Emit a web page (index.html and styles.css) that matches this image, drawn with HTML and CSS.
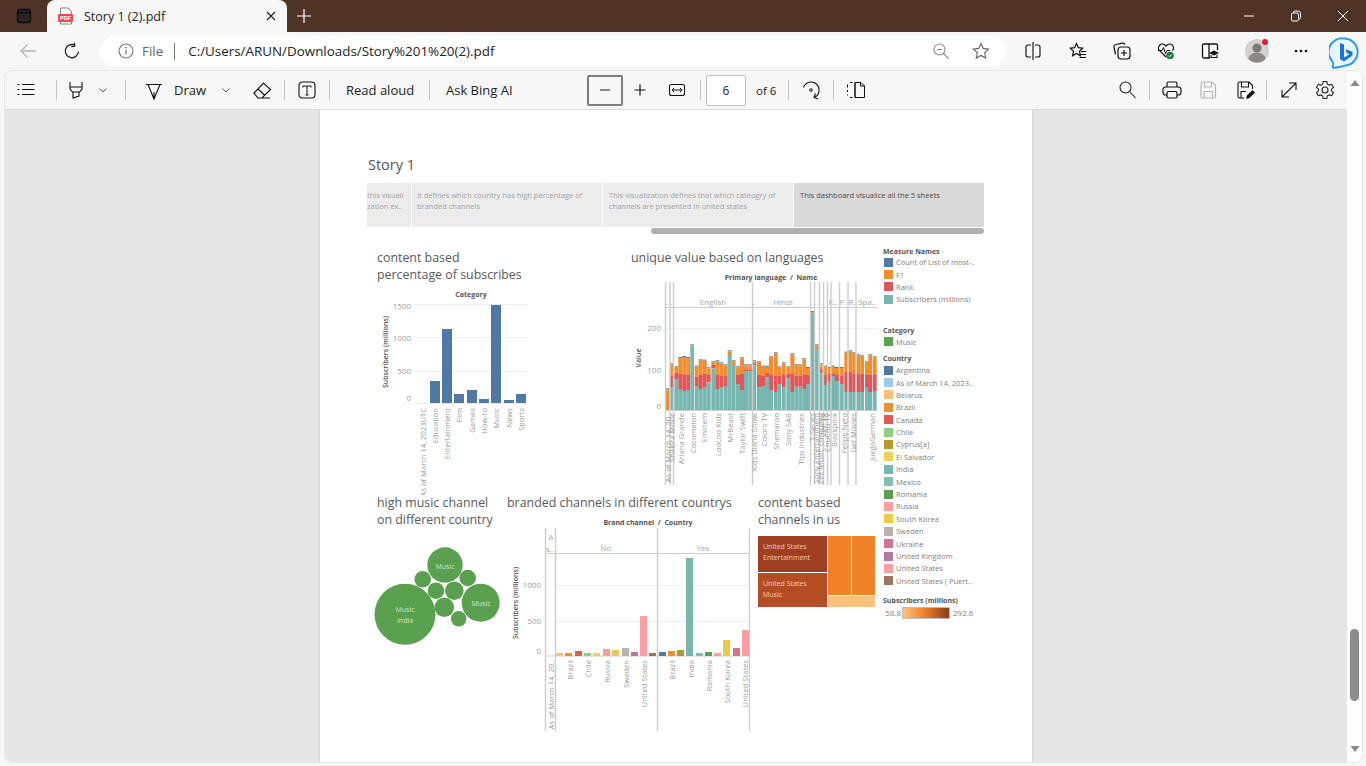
FILE: index.html
```html
<!DOCTYPE html>
<html lang="en">
<head>
    <meta charset="UTF-8">
    <title>Story 1 (2).pdf</title>
    <link rel="stylesheet" href="styles.css">
</head>
<body>
    <!-- tab strip -->
    <div class="tabbar">
        <svg class="tab-panel" width="16" height="16" viewBox="0 0 16 16"><rect x="1.5" y="1.5" width="13" height="13" rx="2.5" fill="#2a2421" stroke="#0c0c0c" stroke-width="1.3"/><path d="M2 4.8h12" stroke="#0c0c0c" stroke-width="1.3"/></svg>
        <div class="tab">
            <svg width="16" height="18" viewBox="0 0 16 18"><path d="M2.5 1h7.500l3.500 3.500V17h-11z" fill="#fff" stroke="#666" stroke-width=".8"/><rect x="0" y="7" width="15" height="8" rx="1" fill="#f04a4a"/><text x="7.5" y="13.4" class="pdf-mark">PDF</text></svg>
            <span class="tab-title">Story 1 (2).pdf</span>
            <svg class="tab-close" width="12" height="12" viewBox="0 0 12 12"><path d="M2 2l8 8M10 2l-8 8" stroke="#222" stroke-width="1.2"/></svg>
        </div>
        <svg class="tab-new" width="16" height="16" viewBox="0 0 16 16"><path d="M8 1v14M1 8h14" stroke="#fff" stroke-width="1.2"/></svg>
        <div class="win-controls">
            <svg width="12" height="12" viewBox="0 0 12 12"><path d="M1 6h10" stroke="#fff" stroke-width="1"/></svg>
            <svg width="12" height="12" viewBox="0 0 12 12"><rect x="1.5" y="3" width="7" height="8" rx="1.4" fill="none" stroke="#fff"/><path d="M3.5 3V2.4A1.4 1.4 0 0 1 4.900 1h3.200a2.400 2.400 0 0 1 2.400 2.400v4.200a1.400 1.400 0 0 1-1.500 1.400" fill="none" stroke="#fff"/></svg>
            <svg width="12" height="12" viewBox="0 0 12 12"><path d="M1 1l10 10M11 1L1 11" stroke="#fff" stroke-width="1"/></svg>
        </div>
    </div>

    <!-- address row -->
    <div class="navbar">
        <svg class="nav-back" width="18" height="16" viewBox="0 0 18 16"><path d="M17 8H2M8.5 1.5L2 8l6.5 6.500" fill="none" stroke="#b5b5b5" stroke-width="1.3"/></svg>
        <svg class="nav-reload" width="18" height="18" viewBox="0 0 18 18"><path d="M15.5 9.500A6.600 6.600 0 1 1 11.400 3" fill="none" stroke="#222" stroke-width="1.3"/><path d="M11.600 .6v3.600H8" fill="none" stroke="#222" stroke-width="1.3" transform="rotate(-12 11 3)"/></svg>
        <div class="address">
            <svg width="16" height="16" viewBox="0 0 16 16"><circle cx="8" cy="8" r="7" fill="none" stroke="#777" stroke-width="1.1"/><path d="M8 7v4.600" stroke="#777" stroke-width="1.3"/><circle cx="8" cy="4.7" r=".9" fill="#777"/></svg>
            <span class="addr-file">File</span>
            <span class="addr-sep"></span>
            <span class="addr-url">C:/Users/ARUN/Downloads/Story%201%20(2).pdf</span>
            <svg class="addr-zoom" width="16" height="16" viewBox="0 0 16 16"><circle cx="6.5" cy="6.5" r="5.5" fill="none" stroke="#888" stroke-width="1.1"/><path d="M4 6.500h5M10.500 10.500l5 5" stroke="#888" stroke-width="1.1"/></svg>
            <svg class="addr-star" width="18" height="18" viewBox="0 0 18 18"><path d="M9 1.500l2.300 4.900 5.300.7-3.900 3.700 1 5.300L9 13.500l-4.700 2.600 1-5.300-3.900-3.700 5.300-.7z" fill="none" stroke="#666" stroke-width="1.1"/></svg>
        </div>
        <svg class="nav-split" width="16" height="18" viewBox="0 0 16 18"><path d="M8 0v18" stroke="#1a1a1a" stroke-width="1.2"/><path d="M6 3H3a2 2 0 0 0-2 2v8a2 2 0 0 0 2 2h3M10 3h3a2 2 0 0 1 2 2v8a2 2 0 0 1-2 2h-3" fill="none" stroke="#1a1a1a" stroke-width="1.2"/></svg>
        <svg class="nav-fav" width="18" height="18" viewBox="0 0 18 18"><path d="M7.500 1.500l1.900 4.200 4.300.5-3.200 3 .9 4.500-3.900-2.300-3.900 2.300.9-4.500-3.200-3 4.300-.5z" fill="none" stroke="#111" stroke-width="1.2"/><path d="M12 9.500h5M11.500 12.500h5.500M10.500 15.500h6.500" stroke="#111" stroke-width="1.1"/></svg>
        <svg class="nav-coll" width="18" height="18" viewBox="0 0 18 18"><rect x="5" y="5" width="12" height="12" rx="3" fill="none" stroke="#111" stroke-width="1.2"/><path d="M11 8v6M8 11h6M2.500 12.500L1 5.500a2.500 2.500 0 0 1 2-3l6.500-1.400a2 2 0 0 1 2.300 1.500" fill="none" stroke="#111" stroke-width="1.2"/></svg>
        <svg class="nav-health" width="18" height="18" viewBox="0 0 18 18"><path d="M9 15L2.600 8.600A3.800 3.800 0 0 1 8 3.200l1 1 1-1a3.800 3.800 0 0 1 5.400 5.400" fill="none" stroke="#111" stroke-width="1.2"/><path d="M1 8.500h4l1.500-3 2 6 1.500-3h3" fill="none" stroke="#111" stroke-width="1"/><circle cx="13" cy="13.5" r="3.8" fill="#1e7e34"/><path d="M11.300 13.500l1.300 1.300 2-2.300" fill="none" stroke="#fff" stroke-width=".9"/></svg>
        <svg class="nav-edu" width="18" height="18" viewBox="0 0 18 18"><path d="M8 2H3a1.500 1.500 0 0 0-1.500 1.500v11A1.500 1.500 0 0 0 3 16h5zM8 2h7a1.500 1.500 0 0 1 1.500 1.500V8M8 16h1" fill="none" stroke="#111" stroke-width="1.3"/><path d="M8 11l5-2.500 5 2.500-5 2.500z" fill="#111"/><path d="M10 13v2.500h6V13" fill="none" stroke="#111" stroke-width="1.1"/></svg>
        <svg class="nav-avatar" width="26" height="26" viewBox="0 0 26 26"><circle cx="12" cy="13" r="12" fill="#d3d1cf"/><circle cx="12" cy="10" r="4.5" fill="#7d7a77"/><path d="M3.500 21a8.500 6.500 0 0 1 17 0 12 12 0 0 1-17 0z" fill="#8c8986"/><circle cx="20" cy="4" r="3" fill="#ee1c25"/></svg>
        <svg class="nav-more" width="14" height="4" viewBox="0 0 14 4"><circle cx="2" cy="2" r="1.3" fill="#111"/><circle cx="7" cy="2" r="1.3" fill="#111"/><circle cx="12" cy="2" r="1.3" fill="#111"/></svg>
        <svg class="nav-bing" width="30" height="32" viewBox="0 0 30 32"><path d="M15 1.500a13.500 13.500 0 0 1 3 26.700c-4 .9-9 2.800-13.500 2.600-1.500 0-1-1.300-.5-2.800.4-1.200.2-2.500-.7-3.800A13.500 13.500 0 0 1 15 1.500z" fill="#eaf6ff" stroke="#2f9bf0" stroke-width="2"/><path d="M11 6l4 1.400v13l5.400-3.200-2.600-1.200-1.500-3.700 7.200 2.500v3.700L15 24.500l-4-2.200z" fill="#1477d4"/></svg>
    </div>

    <div class="pdf-area">
        <div class="pdf-main">
            <!-- pdf toolbar -->
            <div class="toolbar">
                <svg class="tool t-list" viewBox="0 0 24 24"><path d="M8 6.500h12.500M8 11.500h12.500M8 16.500h12.500M3.500 6.500h2M3.500 11.500h2M3.500 16.500h2" stroke="#111" stroke-width="1"/></svg>
                <span class="sep s-1"></span>
                <svg class="tool t-highlight" viewBox="0 0 24 24"><path d="M6 4v7l2.500 3h7l2.500-3V4M6 9h12M9 14v6l6-2v-4" fill="none" stroke="#111" stroke-width="1.1"/></svg>
                <svg class="chev t-chev1" viewBox="0 0 12 12"><path d="M2.500 4.500L6 8l3.500-3.500" fill="none" stroke="#555"/></svg>
                <span class="sep s-2"></span>
                <svg class="tool t-draw" viewBox="0 0 24 24"><path d="M4 6.500h16M6 6.500l6 14.500 6-14.500M12 21v-7" fill="none" stroke="#111" stroke-width="1.1"/></svg>
                <span class="tool-text t-drawtext">Draw</span>
                <svg class="chev t-chev2" viewBox="0 0 12 12"><path d="M2.500 4.500L6 8l3.500-3.500" fill="none" stroke="#555"/></svg>
                <svg class="tool t-eraser" viewBox="0 0 24 24"><path d="M4 15l9.500-10 7 6.500L12 20H8zM8 11l7 6.500M7 20h13" fill="none" stroke="#111" stroke-width="1.1"/></svg>
                <span class="sep s-3"></span>
                <svg class="tool t-textbox" viewBox="0 0 24 24"><rect x="4" y="4" width="16" height="16" rx="3.500" fill="none" stroke="#111" stroke-width="1.1"/><path d="M8 8h8M12 8v9M8 8v1.500M16 8v1.500M10.500 17h3" fill="none" stroke="#111" stroke-width="1"/></svg>
                <span class="sep s-4"></span>
                <span class="tool-text t-read">Read aloud</span>
                <span class="sep s-5"></span>
                <span class="tool-text t-bing">Ask Bing AI</span>
                <div class="zoom-out"><svg width="12" height="12" viewBox="0 0 12 12"><path d="M1 6h10" stroke="#666" stroke-width="1.3"/></svg></div>
                <svg class="tool t-plus" viewBox="0 0 24 24"><path d="M12 6.500v11M6.500 12h11" stroke="#111" stroke-width="1.2"/></svg>
                <svg class="tool t-fit" viewBox="0 0 24 24"><rect x="4.500" y="6.500" width="15" height="11" rx="2" fill="none" stroke="#111" stroke-width="1.1"/><path d="M7 12h10M9 10l-2 2 2 2M15 10l2 2-2 2" fill="none" stroke="#111"/></svg>
                <span class="sep s-6"></span>
                <div class="page-box">6</div>
                <span class="tool-text t-of">of 6</span>
                <span class="sep s-7"></span>
                <svg class="tool t-rotate" viewBox="0 0 24 24"><path d="M4.500 9.500A8 8 0 1 1 15 19.500" fill="none" stroke="#111" stroke-width="1.1"/><path d="M16.500 15.500l-1.500 4 4 1.500" fill="none" stroke="#111" stroke-width="1.1"/><circle cx="12" cy="12" r="1.300" fill="none" stroke="#111"/></svg>
                <span class="sep s-8"></span>
                <svg class="tool t-pages" viewBox="0 0 24 24"><path d="M11 4.500h6l3.500 3.500v11.500H11zM11 4.500v15M16.500 4.500V8h4M8.500 4.500H6M8.500 19.500H6M3.500 6.500v3M3.500 12v2M3.500 16.500v1" fill="none" stroke="#111" stroke-width="1"/></svg>
                <svg class="tool t-search" viewBox="0 0 24 24"><circle cx="10.500" cy="9.500" r="5.500" fill="none" stroke="#222" stroke-width="1.1"/><path d="M14.500 13.500l6 6.500" stroke="#222" stroke-width="1.1"/></svg>
                <span class="sep s-9"></span>
                <svg class="tool t-print" viewBox="0 0 24 24"><path d="M7 9V5.500A1.500 1.500 0 0 1 8.500 4h7A1.500 1.500 0 0 1 17 5.500V9M7 17H5.500A2.500 2.500 0 0 1 3 14.500v-3A2.500 2.500 0 0 1 5.500 9h13a2.500 2.500 0 0 1 2.500 2.500v3a2.500 2.500 0 0 1-2.500 2.500H17" fill="none" stroke="#111" stroke-width="1.2"/><rect x="7" y="13.500" width="10" height="6.500" rx="1.500" fill="none" stroke="#111" stroke-width="1.2"/></svg>
                <svg class="tool t-save" viewBox="0 0 24 24"><path d="M5 5.500A1.500 1.500 0 0 1 6.500 4H16l3.500 3.500v11A1.500 1.500 0 0 1 18 20H6.500A1.500 1.500 0 0 1 5 18.500zM8.500 4v5h7V4M8 20v-6.500h8.500V20" fill="none" stroke="#b5b5b5" stroke-width="1.1"/></svg>
                <svg class="tool t-saveas" viewBox="0 0 24 24"><path d="M11 20H6.500A1.500 1.500 0 0 1 5 18.500v-13A1.500 1.500 0 0 1 6.500 4H16l3.500 3.500V11M8.500 4v5h7V4M8 20v-6.500h5" fill="none" stroke="#111" stroke-width="1.1"/><path d="M13 21l1-3.500 5.500-5.500 2.500 2.500-5.500 5.500z" fill="#111"/></svg>
                <span class="sep s-10"></span>
                <svg class="tool t-expand" viewBox="0 0 24 24"><path d="M5 19L19 5M12 5h7v7M5 12v7h7" fill="none" stroke="#111" stroke-width="1.1"/></svg>
                <svg class="tool t-settings" viewBox="0 0 24 24"><circle cx="12" cy="12" r="3" fill="none" stroke="#222" stroke-width="1.1"/><path d="M10.200 3.500h3.600l.6 2.600 1.700 1 2.600-.8 1.800 3.100-2 1.800v1.600l2 1.800-1.800 3.100-2.600-.8-1.700 1-.6 2.600h-3.600l-.6-2.600-1.700-1-2.600.8-1.800-3.100 2-1.800v-1.600l-2-1.800 1.800-3.100 2.600.8 1.700-1z" fill="none" stroke="#222" stroke-width="1.1"/></svg>
            </div>

            <div class="viewer">
                <div class="page">
                    <h1 class="story-title">Story 1</h1>

                    <div class="story-tabs">
                        <div class="story-tab st-first">this visuali<br>zation ex..</div>
                        <div class="story-tab st-second">It defines which country has high percentage of<br>branded channels</div>
                        <div class="story-tab st-third">This visualization defines that which cateogry of<br>channels are presented in united states</div>
                        <div class="story-tab st-active">This dashboard visualice all the 5 sheets</div>
                    </div>
                    <div class="story-scroll"><div class="story-thumb"></div></div>

                    <div class="dashboard">
                        <div class="dash-left">
                            <div class="dash-row row-top">
                                <section class="cell cell-category">
                                    <h2 class="cell-title title-a">content based<br>percentage of subscribes</h2>
                                    <svg class="chart" width="258" height="210" viewBox="367 285 258 210">
                                        <text x="471" y="297" class="ch-title">Category</text>
                                        <path d="M415 304.500h112M415 337.500h112M415 371.500h112M415 403.500h112" class="grid"/>
                                        <g fill="#4e79a7">
                                            <rect x="430" y="381" width="10" height="22"/>
                                            <rect x="442" y="329" width="10" height="74"/>
                                            <rect x="454" y="394" width="10" height="9"/>
                                            <rect x="467" y="390" width="10" height="13"/>
                                            <rect x="479" y="399" width="10" height="4"/>
                                            <rect x="491" y="305" width="10" height="98"/>
                                            <rect x="504" y="400" width="10" height="3"/>
                                            <rect x="516" y="394" width="10" height="9"/>
                                        </g>
                                        <text x="411" y="309" class="ax-y">1500</text>
                                        <text x="411" y="341" class="ax-y">1000</text>
                                        <text x="411" y="374" class="ax-y">500</text>
                                        <text x="411" y="401" class="ax-y">0</text>
                                        <text transform="translate(388 352) rotate(-90)" class="ax-title">Subscribers (millions)</text>
                                        <text transform="translate(426 408) rotate(-90)" class="ax-x">As of March 14, 2023UTC</text>
                                        <text transform="translate(438 408) rotate(-90)" class="ax-x">Education</text>
                                        <text transform="translate(450 408) rotate(-90)" class="ax-x">Entertainment</text>
                                        <text transform="translate(462 408) rotate(-90)" class="ax-x">Film</text>
                                        <text transform="translate(475 408) rotate(-90)" class="ax-x">Games</text>
                                        <text transform="translate(487 408) rotate(-90)" class="ax-x">How-to</text>
                                        <text transform="translate(499 408) rotate(-90)" class="ax-x">Music</text>
                                        <text transform="translate(512 408) rotate(-90)" class="ax-x">News</text>
                                        <text transform="translate(524 408) rotate(-90)" class="ax-x">Sports</text>
                                    </svg>
                                </section>
                                <section class="cell cell-lang">
                                    <h2 class="cell-title title-b">unique value based on languages</h2>
                                    <svg id="lang-chart" class="chart" width="253" height="225" viewBox="625 270 253 225">
                                        <defs><clipPath id="lang-clip"><rect x="660" y="412" width="218" height="73"/></clipPath></defs>
                                        <text x="771" y="280" class="ch-title">Primary language  /  Name</text>
                                        <path d="M665 328.500h213" class="grid"/>
                                        <text x="713" y="305" class="head">English</text>
                                        <text x="783" y="305" class="head">Hindi</text>
                                        <text x="669" y="305" class="head">. .</text>
                                        <text x="754" y="305" class="head">.</text>
                                        <text x="817" y="305" class="head">. . . .</text>
                                        <text x="833" y="305" class="head">K..</text>
                                        <text x="843" y="305" class="head">P.</text>
                                        <text x="852" y="305" class="head">R.</text>
                                        <text x="867" y="305" class="head">Spa..</text>
                                        <text x="661" y="331" class="ax-y">200</text>
                                        <text x="661" y="373" class="ax-y">100</text>
                                        <text x="661" y="409" class="ax-y">0</text>
                                        <text transform="translate(641 358) rotate(-90)" class="ax-title">Value</text>
                                        <g id="lang-bars"></g>
                                        <path d="M665.500 282v203M670 282v203M673.500 282v203M752.500 282v203M810.500 282v203M814.500 282v203M819.500 282v203M823.500 282v203M827.500 282v203M831 282v203M839.500 282v203M848 282v203M856 282v203" class="divider"/>
                                        <path d="M665 307.500h213M665 410.500h213" class="hairline"/>
                                        <g clip-path="url(#lang-clip)">
                                            <text transform="translate(671 413) rotate(-90)" class="ax-x">As of March 14, 20..</text>
                                            <text transform="translate(675 413) rotate(-90)" class="ax-x">Shakira Music</text>
                                            <text transform="translate(684 413) rotate(-90)" class="ax-x">Ariana Grande</text>
                                            <text transform="translate(696 413) rotate(-90)" class="ax-x">Cocomelon</text>
                                            <text transform="translate(707 413) rotate(-90)" class="ax-x">Eminem</text>
                                            <text transform="translate(721 413) rotate(-90)" class="ax-x">LooLoo Kids</text>
                                            <text transform="translate(733 413) rotate(-90)" class="ax-x">MrBeast</text>
                                            <text transform="translate(745 413) rotate(-90)" class="ax-x">Taylor Swift</text>
                                            <text transform="translate(757 413) rotate(-90)" class="ax-x">Kids Diana Show</text>
                                            <text transform="translate(767 413) rotate(-90)" class="ax-x">Colors TV</text>
                                            <text transform="translate(779 413) rotate(-90)" class="ax-x">Shemaroo</text>
                                            <text transform="translate(791 413) rotate(-90)" class="ax-x">Sony SAB</text>
                                            <text transform="translate(804 413) rotate(-90)" class="ax-x">Tips Industries</text>
                                            <text transform="translate(815 413) rotate(-90)" class="ax-x">T-Series</text>
                                            <text transform="translate(819 413) rotate(-90)" class="ax-x">Sony Entertainment</text>
                                            <text transform="translate(823 413) rotate(-90)" class="ax-x">Zee Music Company</text>
                                            <text transform="translate(826 413) rotate(-90)" class="ax-x">Zee TV</text>
                                            <text transform="translate(830 413) rotate(-90)" class="ax-x">ChuChu TV</text>
                                            <text transform="translate(837 413) rotate(-90)" class="ax-x">Blackpink</text>
                                            <text transform="translate(847 413) rotate(-90)" class="ax-x">Felipe Neto</text>
                                            <text transform="translate(856 413) rotate(-90)" class="ax-x">Get Movies</text>
                                            <text transform="translate(875 413) rotate(-90)" class="ax-x">JuegaGerman</text>
                                        </g>
                                    </svg>
                                </section>
                            </div>
                            <div class="dash-row row-bottom">
                                <section class="cell cell-music">
                                    <h2 class="cell-title title-c">high music channel<br>on different country</h2>
                                    <svg class="chart" width="133" height="120" viewBox="367 530 133 120">
                                        <g fill="#59a14f">
                                            <circle cx="405" cy="614.3" r="30.5"/>
                                            <circle cx="445" cy="565" r="17.7"/>
                                            <circle cx="480.7" cy="602.7" r="19"/>
                                            <circle cx="422.7" cy="579.3" r="8.3"/>
                                            <circle cx="467.7" cy="578" r="8.3"/>
                                            <circle cx="436" cy="590.7" r="8.3"/>
                                            <circle cx="454.3" cy="590.7" r="9.3"/>
                                            <circle cx="444.3" cy="607.3" r="9.7"/>
                                            <circle cx="458.7" cy="618.7" r="7.7"/>
                                        </g>
                                        <text x="405" y="612" class="bubble">Music</text>
                                        <text x="405" y="623" class="bubble">India</text>
                                        <text x="445" y="569" class="bubble">Music</text>
                                        <text x="481" y="606" class="bubble">Music</text>
                                    </svg>
                                </section>
                                <section class="cell cell-brand">
                                    <h2 class="cell-title title-d">branded channels in different countrys</h2>
                                    <svg class="chart" width="250" height="220" viewBox="500 515 250 220">
                                        <text x="648" y="525" class="ch-title">Brand channel  /  Country</text>
                                        <path d="M555 585.500h195M555 621.500h195" class="grid"/>
                                        <path d="M545.500 528v203M555.500 528v203M657.500 528v203M749.500 528v203" class="divider"/>
                                        <path d="M545 553.500h205M545 656h205" class="hairline"/>
                                        <text x="551" y="540" class="head">A</text>
                                        <text x="550" y="552" class="head">s..</text>
                                        <text x="606" y="551" class="head">No</text>
                                        <text x="703" y="551" class="head">Yes</text>
                                        <rect x="556" y="653" width="7" height="3" fill="#ffbe7d"/>
                                        <rect x="565" y="653" width="7" height="3" fill="#f28e2b"/>
                                        <rect x="575" y="651" width="7" height="5" fill="#e15759"/>
                                        <rect x="584" y="653" width="7" height="3" fill="#8cd17d"/>
                                        <rect x="593" y="653" width="7" height="3" fill="#f1ce63"/>
                                        <rect x="603" y="649" width="7" height="7" fill="#ff9d9a"/>
                                        <rect x="612" y="650" width="7" height="6" fill="#edc948"/>
                                        <rect x="622" y="648" width="7" height="8" fill="#bab0ac"/>
                                        <rect x="631" y="652" width="7" height="4" fill="#b07aa1"/>
                                        <rect x="640" y="616" width="7" height="40" fill="#ff9da7"/>
                                        <rect x="649" y="653" width="7" height="3" fill="#9c755f"/>
                                        <rect x="659" y="652" width="7" height="4" fill="#4e79a7"/>
                                        <rect x="668" y="651" width="7" height="5" fill="#f28e2b"/>
                                        <rect x="677" y="650" width="7" height="6" fill="#b6992d"/>
                                        <rect x="686" y="558" width="7" height="98" fill="#79b6ae"/>
                                        <rect x="696" y="653" width="7" height="3" fill="#86bcb6"/>
                                        <rect x="705" y="652" width="7" height="4" fill="#59a14f"/>
                                        <rect x="714" y="653" width="7" height="3" fill="#ff9d9a"/>
                                        <rect x="723" y="640" width="7" height="16" fill="#edc948"/>
                                        <rect x="733" y="648" width="7" height="8" fill="#d37295"/>
                                        <rect x="742" y="630" width="7" height="26" fill="#ff9da7"/>
                                        <text x="541" y="588" class="ax-y">1000</text>
                                        <text x="541" y="624" class="ax-y">500</text>
                                        <text x="541" y="654" class="ax-y">0</text>
                                        <text transform="translate(518 603) rotate(-90)" class="ax-title">Subscribers (millions)</text>
                                        <text transform="translate(554 660) rotate(-90)" class="ax-x">As of March 14, 20..</text>
                                        <text transform="translate(573 660) rotate(-90)" class="ax-x">Brazil</text>
                                        <text transform="translate(591 660) rotate(-90)" class="ax-x">Chile</text>
                                        <text transform="translate(610 660) rotate(-90)" class="ax-x">Russia</text>
                                        <text transform="translate(629 660) rotate(-90)" class="ax-x">Sweden</text>
                                        <text transform="translate(647 660) rotate(-90)" class="ax-x">United States</text>
                                        <text transform="translate(675 660) rotate(-90)" class="ax-x">Brazil</text>
                                        <text transform="translate(694 660) rotate(-90)" class="ax-x">India</text>
                                        <text transform="translate(712 660) rotate(-90)" class="ax-x">Romania</text>
                                        <text transform="translate(730 660) rotate(-90)" class="ax-x">South Korea</text>
                                        <text transform="translate(748 660) rotate(-90)" class="ax-x">United States</text>
                                    </svg>
                                </section>
                                <section class="cell cell-tree">
                                    <h2 class="cell-title title-e">content based<br>channels in us</h2>
                                    <div class="treemap">
                                        <div class="tm-ent">United States<br>Entertainment</div>
                                        <div class="tm-music">United States<br>Music</div>
                                        <div class="tm-or1"></div>
                                        <div class="tm-or2"></div>
                                        <div class="tm-light"></div>
                                    </div>
                                </section>
                            </div>
                        </div>

                        <aside class="legend">
                            <h3 class="lg-head lg-measure">Measure Names</h3>
                            <ul class="lg-list">
                                <li><i class="sw c-blue"></i>Count of List of most-..</li>
                                <li><i class="sw c-orange"></i>F1</li>
                                <li><i class="sw c-red"></i>Rank</li>
                                <li><i class="sw c-teal"></i>Subscribers (millions)</li>
                            </ul>
                            <h3 class="lg-head lg-cat">Category</h3>
                            <ul class="lg-list">
                                <li><i class="sw c-green"></i>Music</li>
                            </ul>
                            <h3 class="lg-head lg-country">Country</h3>
                            <ul class="lg-list">
                                <li><i class="sw c-blue"></i>Argentina</li>
                                <li><i class="sw c-ltblue"></i>As of March 14, 2023..</li>
                                <li><i class="sw c-peach"></i>Belarus</li>
                                <li><i class="sw c-orange"></i>Brazil</li>
                                <li><i class="sw c-red"></i>Canada</li>
                                <li><i class="sw c-ltgreen"></i>Chile</li>
                                <li><i class="sw c-olive"></i>Cyprus[a]</li>
                                <li><i class="sw c-sand"></i>El Salvador</li>
                                <li><i class="sw c-teal"></i>India</li>
                                <li><i class="sw c-ltteal"></i>Mexico</li>
                                <li><i class="sw c-green"></i>Romania</li>
                                <li><i class="sw c-salmon"></i>Russia</li>
                                <li><i class="sw c-yellow"></i>South Korea</li>
                                <li><i class="sw c-grey"></i>Sweden</li>
                                <li><i class="sw c-rose"></i>Ukraine</li>
                                <li><i class="sw c-purple"></i>United Kingdom</li>
                                <li><i class="sw c-pink"></i>United States</li>
                                <li><i class="sw c-brown"></i>United States ( Puert..</li>
                            </ul>
                            <h3 class="lg-head lg-subs">Subscribers (millions)</h3>
                            <div class="lg-range">
                                <span class="lg-min">58.8</span>
                                <span class="lg-ramp"></span>
                                <span>292.6</span>
                            </div>
                        </aside>
                    </div>
                </div>
            </div>
        </div>
        <div class="rail">
            <svg width="10" height="8" viewBox="0 0 10 8"><path d="M5 1l4.500 6H.5z" fill="#8a8a8a"/></svg>
            <div class="rail-thumb"></div>
            <svg class="rail-down" width="10" height="8" viewBox="0 0 10 8"><path d="M5 7L.5 1h9z" fill="#8a8a8a"/></svg>
        </div>
    </div>
    <script src="chart.js"></script>
</body>
</html>
```
FILE: styles.css
```css
* {
    box-sizing: border-box;
}
html, body {
    margin: 0;
    padding: 0;
    height: 766px;
    overflow: hidden;
}
body {
    font-family: "Open Sans", "Noto Sans", sans-serif;
    background-color: #f7f7f7;
    display: flex;
    flex-direction: column;
}

/* tab strip */
.tabbar {
    display: flex;
    align-items: center;
    height: 32px;
    background-color: #4f3327;
    flex: none;
}
.tab-panel {
    margin-left: 16px;
}
.tab {
    display: flex;
    align-items: center;
    width: 240px;
    height: 32px;
    margin-left: 15px;
    padding-left: 11px;
    background-color: #f7f7f7;
    border-radius: 8px 8px 0 0;
}
.pdf-mark {
    font-family: "Liberation Sans", sans-serif;
    font-size: 5.5px;
    font-weight: bold;
    fill: #fff;
    text-anchor: middle;
}
.tab-title {
    margin-left: 10px;
    font-size: 12.5px;
    color: #222;
}
.tab-close {
    margin-left: auto;
    margin-right: 10px;
}
.tab-new {
    margin-left: 9px;
}
.win-controls {
    display: flex;
    align-items: center;
    gap: 35px;
    margin-left: auto;
    margin-right: 17px;
}

/* address row */
.navbar {
    display: flex;
    align-items: center;
    height: 38px;
    flex: none;
    background-color: #f7f7f7;
}
.nav-back {
    margin-left: 19px;
}
.nav-reload {
    margin-left: 26px;
}
.address {
    display: flex;
    align-items: center;
    width: 906px;
    height: 30px;
    margin-left: 19px;
    padding-left: 18px;
    background-color: #fff;
    border-radius: 15px;
}
.addr-file {
    margin-left: 8px;
    font-size: 13.4px;
    color: #666;
}
.addr-sep {
    width: 1px;
    height: 17px;
    margin-left: 11px;
    background-color: #777;
}
.addr-url {
    margin-left: 13px;
    font-size: 13.4px;
    color: #222;
}
.addr-zoom {
    margin-left: auto;
}
.addr-star {
    margin-left: 23px;
    margin-right: 16px;
}
.nav-split { margin-left: 19px; }
.nav-fav { margin-left: 28px; }
.nav-coll { margin-left: 26px; }
.nav-health { margin-left: 26px; }
.nav-edu { margin-left: 26px; }
.nav-avatar { margin-left: 26px; }
.nav-more { margin-left: 23px; }
.nav-bing { margin-left: 21px; margin-top: 4px; }

/* pdf area */
.pdf-area {
    display: flex;
    flex: none;
    height: 693px;
    margin: 0 3px 3px 4px;
    border: 1px solid #e8e8e8;
    border-radius: 8px;
    overflow: hidden;
}
.pdf-main {
    display: flex;
    flex-direction: column;
    width: 1342px;
    flex: none;
}
.toolbar {
    display: flex;
    align-items: center;
    flex: none;
    height: 39px;
    padding-left: 9px;
    background-color: #f7f7f7;
    border-bottom: 1px solid #dcdcdc;
}
.tool {
    flex: none;
    width: 24px;
    height: 24px;
}
.chev {
    flex: none;
    width: 12px;
    height: 12px;
}
.sep {
    flex: none;
    width: 1px;
    height: 20px;
    background-color: #c4c4c4;
}
.tool-text {
    flex: none;
    font-size: 13px;
    color: #222;
    white-space: nowrap;
}
.s-1 { margin-left: 18px; }
.t-highlight { margin-left: 7px; }
.t-chev1 { margin-left: 9px; }
.s-2 { margin-left: 16px; }
.t-draw { margin-left: 16px; }
.t-drawtext { margin-left: 8px; width: 32px; }
.t-chev2 { margin-left: 14px; }
.t-eraser { margin-left: 18px; }
.s-3 { margin-left: 10px; }
.t-textbox { margin-left: 10px; }
.s-4 { margin-left: 10px; }
.t-read { margin-left: 16px; width: 69px; }
.s-5 { margin-left: 14px; }
.t-bing { margin-left: 16px; width: 70px; }
.zoom-out {
    display: flex;
    flex: none;
    align-items: center;
    justify-content: center;
    width: 36px;
    height: 31px;
    margin-left: 71px;
    border: 2px solid #7d7d7d;
    border-radius: 2px;
}
.t-plus { margin-left: 5px; }
.t-fit { margin-left: 13px; }
.s-6 { margin-left: 11px; }
.page-box {
    flex: none;
    width: 40px;
    height: 31px;
    margin-left: 5px;
    background-color: #fff;
    border: 1px solid #bdbdbd;
    border-radius: 2px;
    font-size: 12px;
    line-height: 29px;
    text-align: center;
    color: #222;
}
.t-of { margin-left: 10px; width: 21px; font-size: 11.5px; }
.s-7 { margin-left: 11px; }
.t-rotate { margin-left: 10px; }
.s-8 { margin-left: 10px; }
.t-pages { margin-left: 10px; }
.t-search { margin-left: 247px; }
.s-9 { margin-left: 10px; }
.t-print { margin-left: 10px; }
.t-save { margin-left: 12px; }
.t-saveas { margin-left: 13px; }
.s-10 { margin-left: 9px; }
.t-expand { margin-left: 10px; }
.t-settings { margin-left: 12px; }

.viewer {
    flex: 1;
    min-height: 0;
    overflow: hidden;
    padding-left: 314px;
    background-color: #e6e6e6;
}
.rail {
    display: flex;
    flex-direction: column;
    align-items: center;
    width: 15px;
    padding-top: 8px;
    background-color: #fdfdfd;
}
.rail-thumb {
    width: 9px;
    height: 72px;
    margin-top: 542px;
    background-color: #8c8c8c;
    border-radius: 5px;
}
.rail-down {
    margin-top: 44px;
}

/* the pdf page */
.page {
    width: 714px;
    height: 660px;
    padding: 45px 47px 0;
    background-color: #fff;
    border-left: 1px solid #d8d8d8;
    border-right: 1px solid #d8d8d8;
}
.story-title {
    margin: 0;
    height: 28px;
    font-size: 14.5px;
    font-weight: 400;
    line-height: 20px;
    color: #555;
    padding-left: 1px;
}
.story-tabs {
    display: flex;
    gap: 1px;
    width: 617px;
    height: 44px;
}
.story-tab {
    height: 44px;
    padding: 7px 6px 0;
    background-color: #ececec;
    font-size: 7.5px;
    line-height: 10.5px;
    color: #a3a3a3;
    white-space: nowrap;
    overflow: hidden;
}
.st-first { width: 44px; padding-left: 0; padding-right: 0; }
.st-second { width: 190px; padding-left: 5px; }
.st-third { width: 190px; }
.st-active { width: 190px; background-color: #d9d9d9; color: #4a4a4a; }
.story-scroll {
    width: 617px;
    height: 7px;
    padding-top: 1px;
}
.story-thumb {
    width: 333px;
    height: 6px;
    margin-left: 284px;
    background-color: #b0b0b0;
    border-radius: 3px;
}

.dashboard {
    display: flex;
    width: 617px;
    margin-top: 13px;
}
.dash-left {
    width: 511px;
    flex: none;
}
.dash-row {
    display: flex;
}
.row-top { height: 243px; }
.row-bottom { height: 245px; }
.cell-title {
    margin: 0;
    font-size: 12.4px;
    font-weight: 400;
    line-height: 17px;
    color: #595959;
    white-space: nowrap;
}
.chart {
    display: block;
}
.cell-category { width: 258px; }
.cell-lang { width: 253px; }
.cell-music { width: 133px; }
.cell-brand { width: 250px; }
.cell-tree { width: 128px; }
.title-a { padding: 2px 0 0 10px; height: 38px; }
.title-b { padding: 2px 0 0 6px; height: 23px; }
.title-c { padding: 4px 0 0 10px; height: 40px; }
.title-d { padding: 4px 0 0 7px; height: 25px; }
.title-e { padding: 4px 0 0 8px; height: 46px; }

.ch-title {
    font-size: 7px;
    font-weight: 700;
    fill: #555;
    text-anchor: middle;
    white-space: pre;
}
.ax-y {
    font-size: 8px;
    fill: #a0a0a0;
    text-anchor: end;
}
.ax-title {
    font-size: 7px;
    font-weight: 600;
    fill: #555;
    text-anchor: middle;
}
.ax-x {
    font-size: 7.6px;
    fill: #999;
    text-anchor: end;
}
.head {
    font-size: 8px;
    fill: #a5a5a5;
    text-anchor: middle;
}
.grid {
    fill: none;
    stroke: #efefef;
    stroke-width: 1;
}
.divider {
    fill: none;
    stroke: #cdcdcd;
    stroke-width: 1.4;
}
.hairline {
    fill: none;
    stroke: #cfcfcf;
    stroke-width: 1;
}
.bubble {
    font-size: 7px;
    fill: #cfe4c7;
    text-anchor: middle;
}

/* treemap */
.treemap {
    display: grid;
    grid-template-columns: 69px 23px 23px;
    grid-template-rows: 36px 22px 11px;
    gap: 1px;
    width: 117px;
    margin-left: 8px;
    font-size: 7px;
    line-height: 10.5px;
    color: #f0cdb8;
}
.tm-ent {
    grid-column: 1;
    grid-row: 1;
    padding: 6px 0 0 5px;
    background-color: #9f3e20;
}
.tm-music {
    grid-column: 1;
    grid-row: 2 / 4;
    padding: 6px 0 0 5px;
    background-color: #b64c23;
}
.tm-or1 {
    grid-column: 2;
    grid-row: 1 / 3;
    background-color: #f28228;
}
.tm-or2 {
    grid-column: 3;
    grid-row: 1 / 3;
    background-color: #f28228;
}
.tm-light {
    grid-column: 2 / 4;
    grid-row: 3;
    background-color: #fdc280;
}

/* legend */
.legend {
    padding: 0 0 0 5px;
    font-size: 7.5px;
    color: #808080;
}
.lg-head {
    margin: 0;
    font-size: 7px;
    font-weight: 700;
    line-height: 10px;
    color: #555;
}
.lg-list {
    margin: 0;
    padding: 0;
    list-style: none;
}
.lg-list li {
    display: flex;
    align-items: center;
    height: 12.4px;
    white-space: nowrap;
}
.sw {
    flex: none;
    width: 9px;
    height: 9px;
    margin: 0 3px 0 1px;
}
.lg-measure { line-height: 9px; }
.lg-cat { margin-top: 20px; }
.lg-country { margin-top: 6px; }
.lg-subs { margin-top: 9px; }
.c-blue { background-color: #4e79a7; }
.c-orange { background-color: #f28e2b; }
.c-red { background-color: #e15759; }
.c-teal { background-color: #76b7b2; }
.c-green { background-color: #59a14f; }
.c-ltblue { background-color: #a0cbe8; }
.c-peach { background-color: #ffbe7d; }
.c-ltgreen { background-color: #8cd17d; }
.c-olive { background-color: #b6992d; }
.c-sand { background-color: #f1ce63; }
.c-ltteal { background-color: #86bcb6; }
.c-salmon { background-color: #ff9d9a; }
.c-yellow { background-color: #edc948; }
.c-grey { background-color: #bab0ac; }
.c-rose { background-color: #d37295; }
.c-purple { background-color: #b07aa1; }
.c-pink { background-color: #ff9da7; }
.c-brown { background-color: #9c755f; }
.lg-range {
    display: flex;
    align-items: center;
    margin-top: 1px;
    height: 12px;
    font-size: 8px;
}
.lg-min {
    width: 18px;
    text-align: right;
    margin-right: 1px;
}
.lg-ramp {
    width: 48px;
    height: 12px;
    margin-right: 3px;
    border: 1px solid #bdbdbd;
    background: linear-gradient(to right, #fdc280, #f28228 45%, #8f3a1c);
}
```
FILE: chart.js
```js
// stacked bars for the language chart, numbers read off as x1, x2, top, red top, teal top (at 3x)
const bars = [
    [122,133,448,510,510],
    [135,145,373,408,442],[148,160,382,398,417],[160,172,354,400,447],[172,184,351,403,455],
    [184,196,354,403,450],[196,207,316,320,320],[209,221,380,410,438],[221,233,361,405,447],
    [233,245,362,402,443],[245,257,385,405,427],[259,271,367,375,385],[271,283,364,405,447],
    [283,295,370,407,443],[296,308,376,408,440],[308,320,334,345,345],[320,332,364,375,375],
    [333,345,382,405,432],[345,357,355,402,450],[357,370,376,388,395],[370,381,376,388,395],
    [383,394,364,372,376],[396,408,367,405,443],[408,420,380,408,438],[420,432,380,397,412],
    [432,444,352,405,450],[447,458,340,408,456],[458,469,382,408,432],[471,482,370,403,443],
    [484,496,382,400,415],[496,508,343,400,456],[508,520,376,408,440],[520,532,376,408,440],
    [532,543,358,403,447],[543,555,384,405,432],
    [557,568,216,220,220],[570,581,316,325,327],[584,593,373,385,400],[596,606,380,405,435],
    [608,618,384,402,423],[618,630,380,402,408],[630,642,384,405,425],[645,656,384,408,432],
    [658,668,338,395,456],[670,682,334,396,456],[682,692,340,400,456],[695,706,346,402,456],
    [706,717,349,402,456],[720,732,367,403,443],[730,742,346,405,456],[744,755,352,403,453]
];

const NS = 'http://www.w3.org/2000/svg';
const group = document.getElementById('lang-bars');
const BASE = 510;

function addRect(x1, x2, y1, y2, color) {
    if (y2 <= y1) return;
    const r = document.createElementNS(NS, 'rect');
    r.setAttribute('x', 625 + x1 / 3);
    r.setAttribute('y', 240 + y1 / 3);
    r.setAttribute('width', (x2 - x1) / 3);
    r.setAttribute('height', (y2 - y1) / 3);
    r.setAttribute('fill', color);
    group.appendChild(r);
}

bars.forEach(([x1, x2, top, red, teal]) => {
    addRect(x1, x2, top - 3, top, '#4e79a7');
    addRect(x1, x2, top, red, '#f28e2b');
    addRect(x1, x2, red, teal, '#e15759');
    addRect(x1, x2, teal, BASE, '#76b7b2');
});
```
